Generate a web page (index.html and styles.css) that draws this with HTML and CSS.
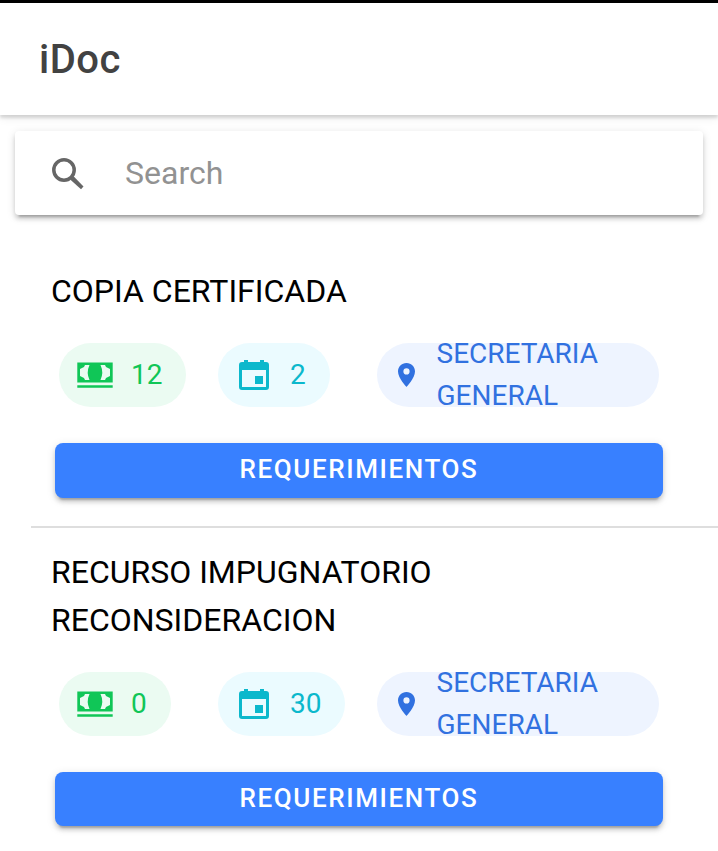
FILE: index.html
```html
<!DOCTYPE html>
<html lang="es">
<head>
<meta charset="utf-8">
<title>iDoc</title>
<link rel="stylesheet" href="styles.css">
</head>
<body>
<header class="toolbar"><h1>iDoc</h1></header>
<main>
  <div class="searchbar">
    <svg class="search-icon" width="32" height="32" viewBox="0 0 32 32"><circle cx="12" cy="12" r="10.200" fill="none" stroke="currentColor" stroke-width="3.500"/><path d="M19 22.300v-1.800l1.500-1.500h1.800L31.500 28.600 29 31.200Z" fill="currentColor"/></svg>
    <span>Search</span>
  </div>
  <section class="item">
    <h2>COPIA CERTIFICADA</h2>
    <div class="chips">
      <div class="chip money"><svg width="36" height="26" viewBox="0 0 36 26"><path fill="currentColor" fill-rule="evenodd" d="M.3.4H35.700V20.600H.3ZM8 3L7 5 3 7V14L7 16 8 18H12.500Q9 10.500 12.500 3ZM28 3H23.500Q27 10.500 23.500 18H28L29 16 33 14V7L29 5ZM.3 23.200H35.700V25.700H.3Z"/></svg><span>12</span></div>
      <div class="chip days"><svg width="30" height="30" viewBox="0 0 30 30"><path fill="currentColor" fill-rule="evenodd" d="M5 0H9V2H21V0H25V2H27Q30 2 30 5V27Q30 30 27 30H3Q0 30 0 27V5Q0 2 3 2H5ZM3 10V27H27V10ZM16 16H24V24H16Z"/></svg><span>2</span></div>
      <div class="chip place"><svg width="18" height="24" viewBox="0 0 18 24"><path fill="currentColor" fill-rule="evenodd" d="M9.500 0C4.500 0 1 3.700 1 8.500 1 15 9.500 24 9.500 24S18 15 18 8.500C18 3.700 14.500 0 9.500 0ZM9.500 5.300A3.100 3.100 0 1 1 9.500 11.500 3.100 3.100 0 1 1 9.500 5.300Z"/></svg><span>SECRETARIA GENERAL</span></div>
    </div>
    <button>REQUERIMIENTOS</button>
  </section>
  <section class="item">
    <h2>RECURSO IMPUGNATORIO RECONSIDERACION</h2>
    <div class="chips">
      <div class="chip money"><svg width="36" height="26" viewBox="0 0 36 26"><path fill="currentColor" fill-rule="evenodd" d="M.3.4H35.700V20.600H.3ZM8 3L7 5 3 7V14L7 16 8 18H12.500Q9 10.500 12.500 3ZM28 3H23.500Q27 10.500 23.500 18H28L29 16 33 14V7L29 5ZM.3 23.200H35.700V25.700H.3Z"/></svg><span>0</span></div>
      <div class="chip days"><svg width="30" height="30" viewBox="0 0 30 30"><path fill="currentColor" fill-rule="evenodd" d="M5 0H9V2H21V0H25V2H27Q30 2 30 5V27Q30 30 27 30H3Q0 30 0 27V5Q0 2 3 2H5ZM3 10V27H27V10ZM16 16H24V24H16Z"/></svg><span>30</span></div>
      <div class="chip place"><svg width="18" height="24" viewBox="0 0 18 24"><path fill="currentColor" fill-rule="evenodd" d="M9.500 0C4.500 0 1 3.700 1 8.500 1 15 9.500 24 9.500 24S18 15 18 8.500C18 3.700 14.500 0 9.500 0ZM9.500 5.300A3.100 3.100 0 1 1 9.500 11.500 3.100 3.100 0 1 1 9.500 5.300Z"/></svg><span>SECRETARIA GENERAL</span></div>
    </div>
    <button>REQUERIMIENTOS</button>
  </section>
</main>
</body>
</html>
```
FILE: styles.css
```css
* { box-sizing: border-box; }
body {
  margin: 0;
  height: 851px;
  overflow: hidden;
  background: #fff;
  font-family: Roboto, sans-serif;
}
h1, h2 { margin: 0; }
svg { display: block; flex: none; }
.toolbar {
  height: 115px;
  border-top: 3px solid #000;
  padding: 2px 0 0 39px;
  display: flex;
  align-items: center;
  box-shadow: 0 3px 3px rgba(0,0,0,.13), 0 2px 10px rgba(0,0,0,.09);
}
.toolbar h1 {
  font-size: 40px;
  line-height: 48px;
  font-weight: 500;
  letter-spacing: .5px;
  color: #424242;
}
.searchbar {
  height: 84px;
  margin: 16px 15px 32px;
  padding-left: 37px;
  display: flex;
  align-items: center;
  gap: 41px;
  background: #fff;
  border-radius: 4px;
  color: #929292;
  font-size: 32px;
  box-shadow: 0 6px 2px -4px rgba(0,0,0,.2), 0 4px 4px rgba(0,0,0,.14), 0 2px 10px rgba(0,0,0,.12);
}
.search-icon { color: #666; margin-top: 2px; }
.item {
  margin-left: 31px;
  padding: 20px 55px 28px 20px;
  border-bottom: 2px solid #dedede;
}
.item:last-child { border-bottom: 0; }
.item h2 {
  max-width: 480px;
  font-size: 32px;
  line-height: 48px;
  font-weight: 400;
  color: #000;
}
.chips {
  margin: 28px 0 36px 8px;
  display: grid;
  grid-template-columns: 159px 159px 282px;
}
.chip {
  height: 64px;
  justify-self: start;
  display: flex;
  align-items: center;
  padding: 0 24px 0 18px;
  border-radius: 32px;
  font-size: 28px;
  line-height: 42px;
}
.money { color: #10c657; background: #ebfbf2; gap: 18px; }
.days { color: #0bb8cc; background: #ebfbff; padding-left: 21px; gap: 21px; }
.place { width: 282px; color: #3171e0; background: #eef4ff; padding-left: 20px; gap: 21.5px; }
button {
  display: block;
  width: 608px;
  height: 55px;
  margin-left: 4px;
  padding: 0 0 3px;
  border: 0;
  border-radius: 8px;
  background: #3880ff;
  color: #fff;
  font: 500 26px/1 Roboto, sans-serif;
  letter-spacing: 1.6px;
  box-shadow: 0 6px 2px -4px rgba(0,0,0,.2), 0 4px 4px rgba(0,0,0,.14), 0 2px 10px rgba(0,0,0,.12);
}
.item:last-child button { height: 54px; padding-bottom: 2px; }
```
